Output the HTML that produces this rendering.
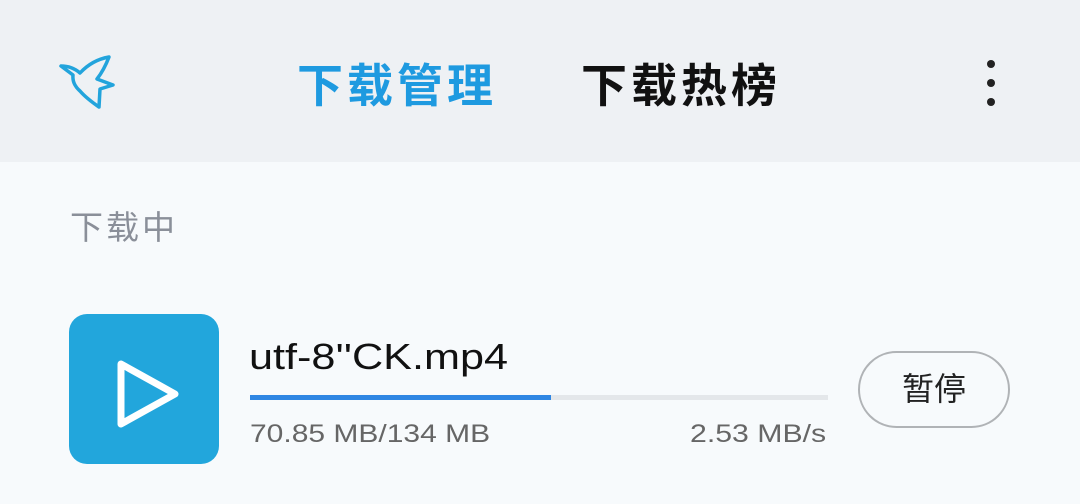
<!DOCTYPE html><html><head><meta charset="utf-8"><style>
body{margin:0;width:1080px;height:504px;background:#f7fafc;font-family:"Liberation Sans","Noto Sans CJK SC",sans-serif;position:relative;overflow:hidden}
.hd{position:absolute;left:0;top:0;width:1080px;height:162px;background:#eef1f4}
.t{position:absolute;top:56px;font-size:46px;font-weight:bold;line-height:60px;letter-spacing:4px}
.a{position:absolute}
.w{transform-origin:0 50%;white-space:nowrap}
</style></head><body>
<div class="hd"></div>
<svg class="a" style="left:40px;top:40px" width="80" height="80" viewBox="40 40 80 80"><path d="M61 66 Q72 66 80 73 Q92 60 109 57 Q104 70 97 79 L113 85 L100 89 L99 107 Q86 98 80 91 Q72 84 73 75 Z" fill="none" stroke="#22a4dc" stroke-width="3.5" stroke-linejoin="round"/></svg>
<div class="t" style="left:297px;color:#1e9ae0">下载管理</div>
<div class="t" style="left:581px;color:#111">下载热榜</div>
<div class="a" style="left:987px;top:60px;width:8px;height:8px;border-radius:50%;background:#222"></div>
<div class="a" style="left:987px;top:79px;width:8px;height:8px;border-radius:50%;background:#222"></div>
<div class="a" style="left:987px;top:98px;width:8px;height:8px;border-radius:50%;background:#222"></div>
<div class="a" style="left:70px;top:208px;font-size:33px;color:#8a8f99;line-height:40px;letter-spacing:3px">下载中</div>
<div class="a" style="left:69px;top:314px;width:150px;height:150px;border-radius:18px;background:#22a6dc"></div>
<svg class="a" style="left:69px;top:314px" width="150" height="150"><path d="M52 50 L106 80 L52 110 Z" fill="none" stroke="#fff" stroke-width="7" stroke-linejoin="round"/></svg>
<div class="a w" style="left:249px;top:335px;font-size:36px;color:#111;line-height:44px;transform:scaleX(1.2)">utf-8''CK.mp4</div>
<div class="a" style="left:250px;top:395px;width:578px;height:5px;background:#e4e7ea"></div>
<div class="a" style="left:250px;top:395px;width:301px;height:5px;background:#2f86e3"></div>
<div class="a w" style="left:250px;top:418px;font-size:25px;color:#666;line-height:32px;transform:scaleX(1.2)">70.85 MB/134 MB</div>
<div class="a w" style="left:690px;top:418px;font-size:25px;color:#666;line-height:32px;transform:scaleX(1.21)">2.53 MB/s</div>
<div class="a" style="left:858px;top:351px;width:152px;height:77px;border:2px solid #b0b3b6;border-radius:40px;box-sizing:border-box;text-align:center;line-height:73px;font-size:32px;color:#222">暂停</div>
</body></html>
